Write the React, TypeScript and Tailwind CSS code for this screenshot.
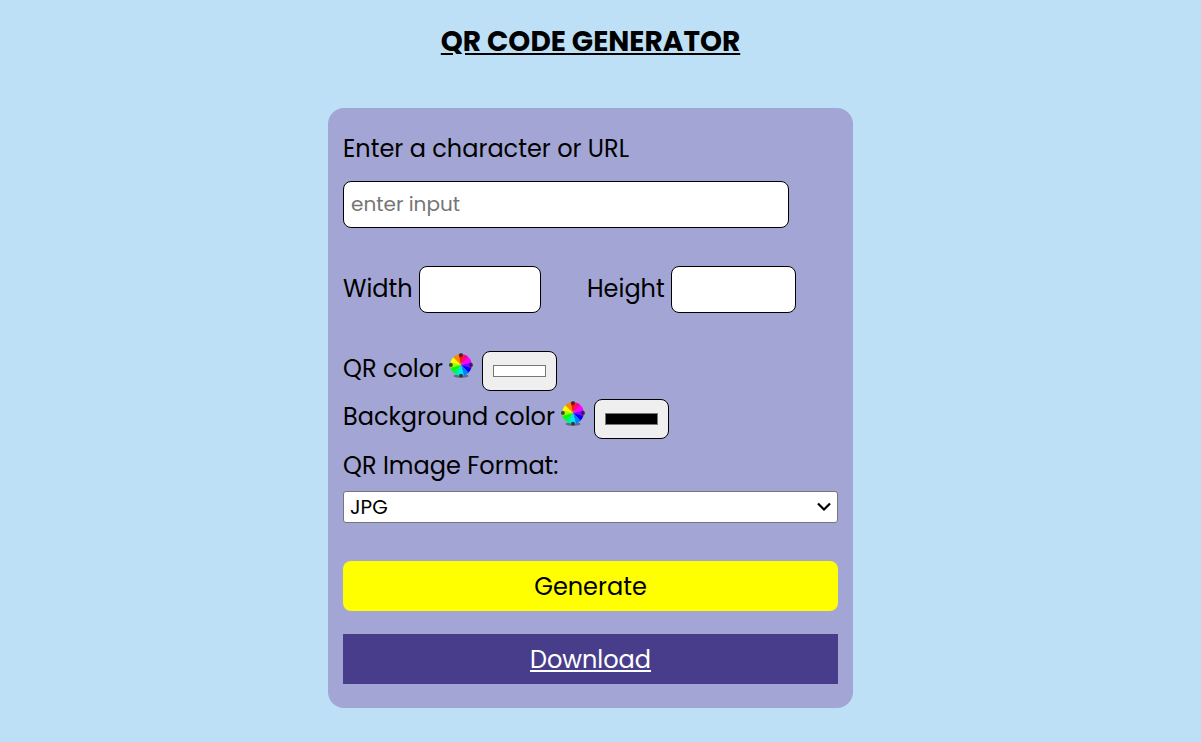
import React from "react";

const SLICES = [
  "#ff1800", "#ff0090", "#ff00ff", "#9000ff", "#0000ff", "#0080ff",
  "#00e8f0", "#00f090", "#00ff00", "#a0ff00", "#ffff00", "#ff8800",
];

function point(deg: number) {
  const a = (deg * Math.PI) / 180;
  return `${(12 + 10.8 * Math.sin(a)).toFixed(2)} ${(12 - 10.8 * Math.cos(a)).toFixed(2)}`;
}

function ColorWheel() {
  return (
    <svg viewBox="0 0 24 26" className="mb-[6px] h-[26px] w-6 shrink-0" aria-hidden="true">
      <ellipse cx="12" cy="23" rx="7.5" ry="1.8" fill="#22303c" opacity="0.5" />
      {SLICES.map((color, i) => (
        <path
          key={color}
          d={`M12 12L${point(i * 30 - 15)}A10.8 10.8 0 0 1 ${point(i * 30 + 16)}Z`}
          fill={color}
        />
      ))}
      <g fill="#222" opacity="0.8">
        <circle cx="12" cy="1.9" r="1.9" />
        <circle cx="1.9" cy="12" r="1.9" />
        <circle cx="22.1" cy="12" r="1.9" />
        <circle cx="12" cy="22.6" r="1.9" />
      </g>
    </svg>
  );
}

const box = "rounded-lg border border-black bg-white px-[7px] pb-[2px] h-[47px] text-xl";
const swatch = "h-10 w-[75px] rounded-lg border border-black bg-[#efefef] px-2 py-[9px]";
const swatchLabel = "mr-[9px] flex items-center gap-[6px] pb-1";

export default function App() {
  return (
    <div className="min-h-screen bg-[#bde0f6] pr-5 pb-8 font-['Poppins','Inter',sans-serif] text-2xl text-black">
      <h1 className="pt-[21px] text-center text-[28px] leading-[42px] font-bold underline">
        QR CODE GENERATOR
      </h1>
      <main className="mx-auto mt-[45px] w-full max-w-[525px] rounded-2xl bg-[#a3a6d4] px-[15px] pt-[23px] pb-6">
        <label htmlFor="content" className="block leading-9">Enter a character or URL</label>
        <input
          id="content"
          type="text"
          placeholder="enter input"
          className={`${box} mt-[14px] block w-9/10 placeholder:text-[#757575]`}
        />
        <div className="mt-[38px] flex items-center">
          <label htmlFor="width" className="w-[76px] pb-[2px]">Width</label>
          <input id="width" type="text" className={`${box} w-[122px]`} />
          <label htmlFor="height" className="ml-[46px] w-[84px] pb-[2px]">Height</label>
          <input id="height" type="text" className={`${box} w-[125px]`} />
        </div>
        <div className="mt-[38px] flex h-10 items-center">
          <label htmlFor="fg" className={swatchLabel}>
            QR color <ColorWheel />
          </label>
          <input id="fg" type="color" defaultValue="#ffffff" className={swatch} />
        </div>
        <div className="mt-2 flex h-10 items-center">
          <label htmlFor="bg" className={swatchLabel}>
            Background color <ColorWheel />
          </label>
          <input id="bg" type="color" defaultValue="#000000" className={swatch} />
        </div>
        <label htmlFor="format" className="mt-[9px] block leading-9">QR Image Format:</label>
        <div className="mt-[7px] grid items-center">
          <select
            id="format"
            defaultValue="JPG"
            className="col-start-1 row-start-1 h-8 w-full appearance-none rounded-[3px] border border-[#767676] bg-white px-[6px] text-xl"
          >
            <option>JPG</option>
            <option>PNG</option>
            <option>SVG</option>
          </select>
          <svg viewBox="0 0 14 10" className="pointer-events-none col-start-1 row-start-1 mr-[7px] h-[10px] w-[14px] justify-self-end" aria-hidden="true">
            <path d="M1 1.5L7 7.5L13 1.5" fill="none" stroke="#000" strokeWidth="2.2" />
          </svg>
        </div>
        <button type="button" className="mt-[38px] h-[50px] w-full rounded-lg bg-[#ffff00] pt-[2px]">
          Generate
        </button>
        <a href="#download" className="mt-[23px] block bg-[#483d8b] pt-[2px] text-center leading-[48px] text-white underline">
          Download
        </a>
      </main>
    </div>
  );
}
